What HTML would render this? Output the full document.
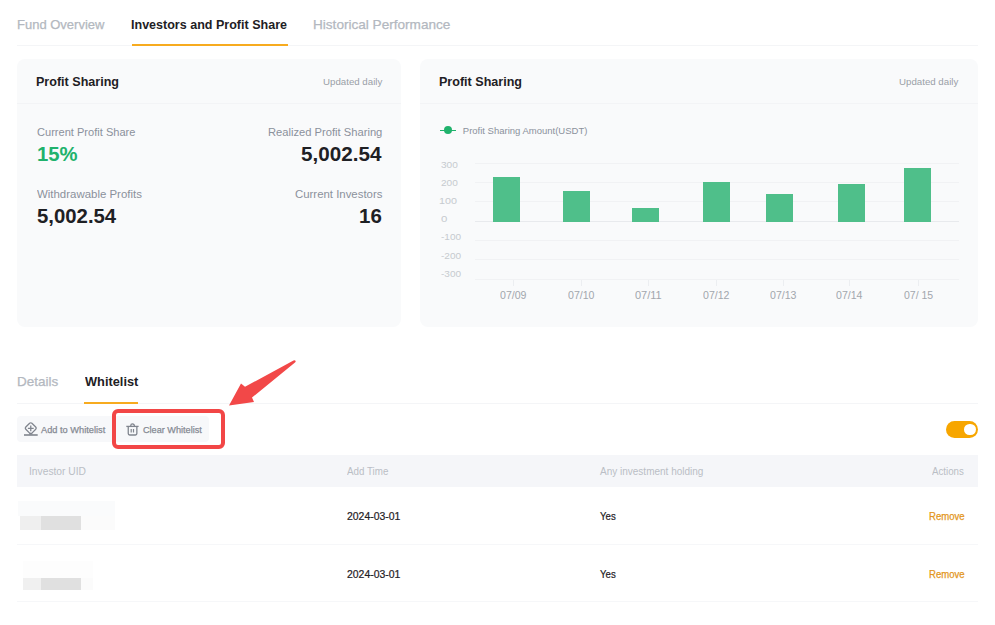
<!DOCTYPE html>
<html><head><meta charset="utf-8"><style>
html,body{margin:0;padding:0;width:995px;height:625px;overflow:hidden;background:#fff}
body{position:relative;font-family:"Liberation Sans",sans-serif}
.t{position:absolute;white-space:nowrap;transform-origin:0 0}
.r{position:absolute}
.card{position:absolute;background:#f9fafb;border-radius:8px}
</style></head><body>
<div class="t" style="left:17.00px;top:16.60px;font-size:13px;line-height:16px;font-weight:normal;color:#b3b8c0;transform:scaleX(1.0000);-webkit-text-stroke:0.25px currentColor">Fund Overview</div>
<div class="t" style="left:131.34px;top:16.60px;font-size:13px;line-height:16px;font-weight:bold;color:#1e2024;transform:scaleX(0.9640);">Investors and Profit Share</div>
<div class="t" style="left:312.96px;top:16.60px;font-size:13px;line-height:16px;font-weight:normal;color:#b3b8c0;transform:scaleX(1.0446);-webkit-text-stroke:0.25px currentColor">Historical Performance</div>
<div class="r" style="left:17px;top:45px;width:961px;height:1px;background:#f4f5f7"></div>
<div class="r" style="left:132px;top:44px;width:156px;height:2px;background:#f7ab1f"></div>
<div class="card" style="left:17px;top:59px;width:384px;height:268px"></div>
<div class="card" style="left:420px;top:59px;width:558px;height:268px"></div>
<div class="r" style="left:17px;top:103px;width:384px;height:1px;background:#f3f4f6"></div>
<div class="r" style="left:420px;top:103px;width:558px;height:1px;background:#f3f4f6"></div>
<div class="t" style="left:35.83px;top:74.10px;font-size:13px;line-height:16px;font-weight:bold;color:#1e2024;transform:scaleX(0.9655);">Profit Sharing</div>
<div class="t" style="left:322.50px;top:75.70px;font-size:9.5px;line-height:11px;font-weight:normal;color:#9a9fa7;transform:scaleX(1.0207);">Updated daily</div>
<div class="t" style="left:438.83px;top:74.10px;font-size:13px;line-height:16px;font-weight:bold;color:#1e2024;transform:scaleX(0.9655);">Profit Sharing</div>
<div class="t" style="left:899.00px;top:75.70px;font-size:9.5px;line-height:11px;font-weight:normal;color:#9a9fa7;transform:scaleX(1.0207);">Updated daily</div>
<div class="t" style="left:37.00px;top:125.70px;font-size:11px;line-height:13px;font-weight:normal;color:#8b919b;transform:scaleX(1.0061);">Current Profit Share</div>
<div class="t" style="left:36.69px;top:141.50px;font-size:20px;line-height:24px;font-weight:bold;color:#20b26c;transform:scaleX(1.0128);">15%</div>
<div class="t" style="left:37.00px;top:188.00px;font-size:11px;line-height:13px;font-weight:normal;color:#8b919b;transform:scaleX(1.0396);">Withdrawable Profits</div>
<div class="t" style="left:36.68px;top:203.50px;font-size:20px;line-height:24px;font-weight:bold;color:#1e2024;transform:scaleX(1.0169);">5,002.54</div>
<div class="t" style="left:268.48px;top:125.70px;font-size:11px;line-height:13px;font-weight:normal;color:#8b919b;transform:scaleX(1.0162);">Realized Profit Sharing</div>
<div class="t" style="left:300.97px;top:141.70px;font-size:20px;line-height:24px;font-weight:bold;color:#1e2024;transform:scaleX(1.0325);">5,002.54</div>
<div class="t" style="left:294.80px;top:188.00px;font-size:11px;line-height:13px;font-weight:normal;color:#8b919b;transform:scaleX(1.0357);">Current Investors</div>
<div class="t" style="left:358.98px;top:203.70px;font-size:20px;line-height:24px;font-weight:bold;color:#1e2024;transform:scaleX(1.0238);">16</div>
<div class="r" style="left:440px;top:129.5px;width:16px;height:1.5px;background:#20b26c"></div>
<div class="r" style="left:444px;top:126px;width:8px;height:8px;border-radius:50%;background:#20b26c"></div>
<div class="t" style="left:462.80px;top:125.00px;font-size:9.5px;line-height:11px;font-weight:normal;color:#8b919b;transform:scaleX(1.0000);">Profit Sharing Amount(USDT)</div>
<div class="r" style="left:475px;top:163.1px;width:484px;height:1px;background:#f1f2f4"></div>
<div class="r" style="left:475px;top:182.3px;width:484px;height:1px;background:#f1f2f4"></div>
<div class="r" style="left:475px;top:201.1px;width:484px;height:1px;background:#f1f2f4"></div>
<div class="r" style="left:475px;top:220.9px;width:484px;height:1px;background:#e8eaed"></div>
<div class="r" style="left:475px;top:239.8px;width:484px;height:1px;background:#f1f2f4"></div>
<div class="r" style="left:475px;top:259.3px;width:484px;height:1px;background:#f1f2f4"></div>
<div class="r" style="left:475px;top:278.9px;width:484px;height:1px;background:#f1f2f4"></div>
<div class="t" style="left:440.60px;top:158.90px;font-size:9.5px;line-height:11px;font-weight:normal;color:#c6cacf;transform:scaleX(1.0625);">300</div>
<div class="t" style="left:440.60px;top:177.25px;font-size:9.5px;line-height:11px;font-weight:normal;color:#c6cacf;transform:scaleX(1.0625);">200</div>
<div class="t" style="left:439.47px;top:195.00px;font-size:9.5px;line-height:11px;font-weight:normal;color:#c6cacf;transform:scaleX(1.1333);">100</div>
<div class="t" style="left:440.60px;top:213.30px;font-size:9.5px;line-height:11px;font-weight:normal;color:#c6cacf;transform:scaleX(1.2000);">0</div>
<div class="t" style="left:440.60px;top:231.40px;font-size:9.5px;line-height:11px;font-weight:normal;color:#c6cacf;transform:scaleX(1.0526);">-100</div>
<div class="t" style="left:440.60px;top:249.50px;font-size:9.5px;line-height:11px;font-weight:normal;color:#c6cacf;transform:scaleX(1.0526);">-200</div>
<div class="t" style="left:440.60px;top:267.50px;font-size:9.5px;line-height:11px;font-weight:normal;color:#c6cacf;transform:scaleX(1.0526);">-300</div>
<div class="r" style="left:493px;top:177px;width:27px;height:44.5px;background:#4fbf8a"></div>
<div class="r" style="left:563px;top:191px;width:27px;height:30.5px;background:#4fbf8a"></div>
<div class="r" style="left:632px;top:208px;width:27px;height:13.5px;background:#4fbf8a"></div>
<div class="r" style="left:703px;top:182px;width:27px;height:39.5px;background:#4fbf8a"></div>
<div class="r" style="left:766px;top:194px;width:27px;height:27.5px;background:#4fbf8a"></div>
<div class="r" style="left:838px;top:184px;width:27px;height:37.5px;background:#4fbf8a"></div>
<div class="r" style="left:904px;top:168px;width:27px;height:53.5px;background:#4fbf8a"></div>
<div class="r" style="left:513px;top:280px;width:1px;height:6px;background:#eceef1"></div>
<div class="t" style="left:500.40px;top:288.80px;font-size:10.5px;line-height:13px;font-weight:normal;color:#a2a6ad;transform:scaleX(1.0077);">07/09</div>
<div class="r" style="left:581px;top:280px;width:1px;height:6px;background:#eceef1"></div>
<div class="t" style="left:568.40px;top:288.80px;font-size:10.5px;line-height:13px;font-weight:normal;color:#a2a6ad;transform:scaleX(1.0077);">07/10</div>
<div class="r" style="left:648px;top:280px;width:1px;height:6px;background:#eceef1"></div>
<div class="t" style="left:635.40px;top:288.80px;font-size:10.5px;line-height:13px;font-weight:normal;color:#a2a6ad;transform:scaleX(1.0480);">07/11</div>
<div class="r" style="left:716px;top:280px;width:1px;height:6px;background:#eceef1"></div>
<div class="t" style="left:703.40px;top:288.80px;font-size:10.5px;line-height:13px;font-weight:normal;color:#a2a6ad;transform:scaleX(1.0077);">07/12</div>
<div class="r" style="left:783px;top:280px;width:1px;height:6px;background:#eceef1"></div>
<div class="t" style="left:770.40px;top:288.80px;font-size:10.5px;line-height:13px;font-weight:normal;color:#a2a6ad;transform:scaleX(1.0077);">07/13</div>
<div class="r" style="left:849px;top:280px;width:1px;height:6px;background:#eceef1"></div>
<div class="t" style="left:836.40px;top:288.80px;font-size:10.5px;line-height:13px;font-weight:normal;color:#a2a6ad;transform:scaleX(1.0077);">07/14</div>
<div class="r" style="left:918px;top:280px;width:1px;height:6px;background:#eceef1"></div>
<div class="t" style="left:904.00px;top:288.80px;font-size:10.5px;line-height:13px;font-weight:normal;color:#a2a6ad;transform:scaleX(1.0000);">07/ 15</div>
<div class="t" style="left:16.66px;top:374.40px;font-size:13px;line-height:16px;font-weight:normal;color:#b3b8c0;transform:scaleX(1.0359);-webkit-text-stroke:0.25px currentColor">Details</div>
<div class="t" style="left:84.60px;top:374.40px;font-size:13px;line-height:16px;font-weight:bold;color:#1e2024;transform:scaleX(0.9852);">Whitelist</div>
<div class="r" style="left:17px;top:403px;width:961px;height:1px;background:#f4f5f7"></div>
<div class="r" style="left:84px;top:402px;width:54px;height:2px;background:#f7ab1f"></div>
<div class="r" style="left:17px;top:416px;width:97px;height:26px;border-radius:4px 0 0 4px;background:#f7f8fa"></div>
<div class="r" style="left:114px;top:416px;width:95px;height:26px;border-radius:4px;background:#f7f8fa"></div>
<div class="t" style="left:41.40px;top:423.60px;font-size:9.5px;line-height:11px;font-weight:normal;color:#858a93;transform:scaleX(0.9727);-webkit-text-stroke:0.25px currentColor">Add to Whitelist</div>
<div class="t" style="left:143.00px;top:423.60px;font-size:9.5px;line-height:11px;font-weight:normal;color:#858a93;transform:scaleX(0.9607);-webkit-text-stroke:0.25px currentColor">Clear Whitelist</div>
<svg class="r" style="left:22px;top:420px" width="18" height="18" viewBox="0 0 18 18">
<rect x="4.46" y="3.9" width="8.6" height="8.6" rx="1.6" transform="rotate(45 8.76 8.2)" fill="none" stroke="#80858e" stroke-width="1.3"/>
<path d="M8.76 5.6 V11.2 M5.9 8.4 H11.7" stroke="#80858e" stroke-width="1.3"/>
<path d="M2 15 H15.7" stroke="#80858e" stroke-width="1.6"/>
<path d="M7.2 13.6 L8.76 12.6 L10.3 13.6 L10.6 14.4 H6.9 Z" fill="#80858e"/>
</svg>
<svg class="r" style="left:124px;top:421px" width="16" height="16" viewBox="0 0 16 16">
<path d="M2.3 5.4 H14.6" stroke="#80858e" stroke-width="1.3"/>
<path d="M6.75 5.4 V4.7 A1.8 1.8 0 0 1 10.35 4.7 V5.4" fill="none" stroke="#80858e" stroke-width="1.3"/>
<path d="M4.25 5.4 V12.6 Q4.25 14 5.65 14 H11.45 Q12.85 14 12.85 12.6 V5.4" fill="none" stroke="#80858e" stroke-width="1.3"/>
<path d="M7.2 7.9 V11.5 M9.5 7.9 V11.5" stroke="#80858e" stroke-width="1.2"/>
</svg>
<div class="r" style="left:111.5px;top:408.7px;width:113.5px;height:40.8px;box-sizing:border-box;border:4px solid #f24646;border-radius:6px"></div>
<svg class="r" style="left:0;top:0" width="995" height="625" viewBox="0 0 995 625">
<path d="M295.5 360.8 Q296 362 295 362.6 L252 397.5 L254 402 L229 405.5 L241 383.5 L245 386.8 L293.5 360.6 Q295 360 295.5 360.8 Z" fill="#f24848"/>
</svg>
<div class="r" style="left:946px;top:421px;width:32px;height:16.5px;border-radius:9px;background:#f7a600"></div>
<div class="r" style="left:964px;top:423.5px;width:11.5px;height:11.5px;border-radius:50%;background:#fff"></div>
<div class="r" style="left:17px;top:455px;width:961px;height:32px;background:#f5f6f9"></div>
<div class="t" style="left:29.47px;top:466.10px;font-size:10px;line-height:12px;font-weight:normal;color:#babec5;transform:scaleX(1.0259);">Investor UID</div>
<div class="t" style="left:347.30px;top:466.10px;font-size:10px;line-height:12px;font-weight:normal;color:#babec5;transform:scaleX(0.9786);">Add Time</div>
<div class="t" style="left:600.00px;top:466.10px;font-size:10px;line-height:12px;font-weight:normal;color:#babec5;transform:scaleX(1.0000);">Any investment holding</div>
<div class="t" style="left:931.80px;top:466.10px;font-size:10px;line-height:12px;font-weight:normal;color:#babec5;transform:scaleX(0.9727);">Actions</div>
<div class="r" style="left:17px;top:544px;width:961px;height:1px;background:#f6f7f9"></div>
<div class="r" style="left:17px;top:601px;width:961px;height:1px;background:#f6f7f9"></div>
<div class="t" style="left:347.30px;top:510.90px;font-size:10px;line-height:12px;font-weight:normal;color:#1e2024;transform:scaleX(1.0431);-webkit-text-stroke:0.2px currentColor">2024-03-01</div>
<div class="t" style="left:600.00px;top:510.90px;font-size:10px;line-height:12px;font-weight:normal;color:#1e2024;transform:scaleX(0.9625);-webkit-text-stroke:0.2px currentColor">Yes</div>
<div class="t" style="left:928.54px;top:510.90px;font-size:10px;line-height:12px;font-weight:normal;color:#e3961c;transform:scaleX(0.9556);-webkit-text-stroke:0.25px currentColor">Remove</div>
<div class="t" style="left:347.30px;top:568.50px;font-size:10px;line-height:12px;font-weight:normal;color:#1e2024;transform:scaleX(1.0431);-webkit-text-stroke:0.2px currentColor">2024-03-01</div>
<div class="t" style="left:600.00px;top:568.50px;font-size:10px;line-height:12px;font-weight:normal;color:#1e2024;transform:scaleX(0.9625);-webkit-text-stroke:0.2px currentColor">Yes</div>
<div class="t" style="left:928.54px;top:568.50px;font-size:10px;line-height:12px;font-weight:normal;color:#e3961c;transform:scaleX(0.9556);-webkit-text-stroke:0.25px currentColor">Remove</div>
<div class="r" style="left:18px;top:501px;width:97px;height:14.5px;background:#fafbfc"></div>
<div class="r" style="left:20px;top:515.5px;width:21px;height:14px;background:#efefef"></div>
<div class="r" style="left:41px;top:515.5px;width:40px;height:14px;background:#e0e0e0"></div>
<div class="r" style="left:81px;top:515.5px;width:34px;height:14px;background:#fbfbfb"></div>
<div class="r" style="left:22.7px;top:561.3px;width:70px;height:16.5px;background:#fdfdfd"></div>
<div class="r" style="left:22.7px;top:578px;width:18.3px;height:12px;background:#f0f0f0"></div>
<div class="r" style="left:41px;top:578px;width:40px;height:12px;background:#e0e0e0"></div>
<div class="r" style="left:81px;top:578px;width:11.7px;height:12px;background:#fbfbfb"></div>
</body></html>
